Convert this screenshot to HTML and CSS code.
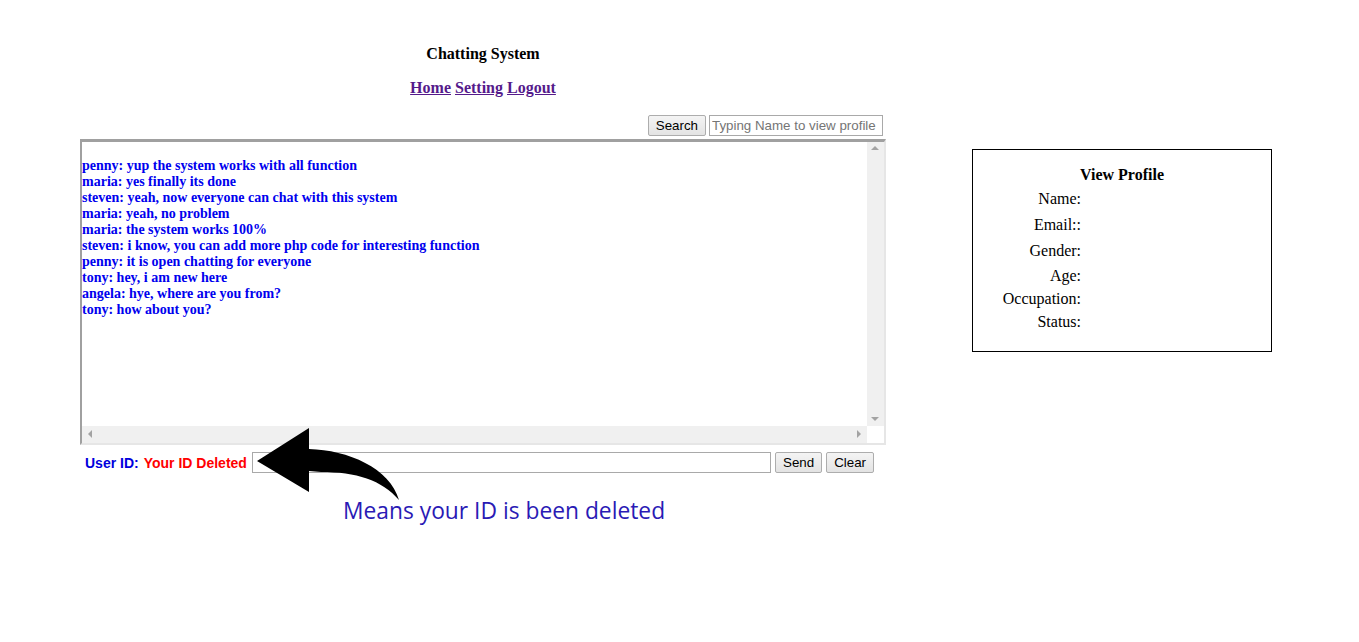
FILE: index.html
```html
<!DOCTYPE html>
<html>
<head>
<meta charset="utf-8">
<title>Chatting System</title>
<link rel="stylesheet" href="styles.css">
</head>
<body>
<div class="page">
  <div class="main">
    <h1 class="title">Chatting System</h1>
    <nav class="nav"><a href="#">Home</a> <a href="#">Setting</a> <a href="#">Logout</a></nav>
    <div class="search-row">
      <button class="btn">Search</button>
      <input class="field search-field" type="text" placeholder="Typing Name to view profile">
    </div>
    <div class="chat">
      <div class="chat-text">
        <div>penny: yup the system works with all function</div>
        <div>maria: yes finally its done</div>
        <div>steven: yeah, now everyone can chat with this system</div>
        <div>maria: yeah, no problem</div>
        <div>maria: the system works 100%</div>
        <div>steven: i know, you can add more php code for interesting function</div>
        <div>penny: it is open chatting for everyone</div>
        <div>tony: hey, i am new here</div>
        <div>angela: hye, where are you from?</div>
        <div>tony: how about you?</div>
      </div>
      <div class="vbar">
        <span class="tri tri-up"></span>
        <span class="tri tri-down"></span>
      </div>
      <div class="hbar">
        <span class="tri tri-left"></span>
        <span class="tri tri-right"></span>
      </div>
      <div class="corner"></div>
    </div>
    <div class="send-row">
      <span class="uid-label">User ID:</span>
      <span class="uid-value">Your ID Deleted</span>
      <input class="field msg-field" type="text">
      <button class="btn">Send</button>
      <button class="btn">Clear</button>
    </div>
    <div class="note">Means your ID is been deleted</div>
    <svg class="arrow" width="160" height="90" viewBox="0 0 160 90">
      <path d="M7,41 L59,8 L59,29 C98,30 140,48 149,80 C132,60 106,52 71,52 L59,51 L59,72 Z" fill="#000"/>
    </svg>
  </div>
  <aside class="profile">
    <h2 class="profile-title">View Profile</h2>
    <div class="profile-grid">
      <div class="lbl">Name:</div><div class="val"></div>
      <div class="lbl">Email::</div><div class="val"></div>
      <div class="lbl">Gender:</div><div class="val"></div>
      <div class="lbl">Age:</div><div class="val"></div>
      <div class="lbl">Occupation:</div><div class="val"></div>
      <div class="lbl">Status:</div><div class="val"></div>
    </div>
  </aside>
</div>
</body>
</html>
```
FILE: styles.css
```css
html, body {
  margin: 0;
  padding: 0;
  background: #fff;
}
body {
  font-family: "Liberation Serif", "Times New Roman", serif;
  color: #000;
}
.page {
  position: relative;
  display: flex;
  align-items: flex-start;
  padding: 45px 0 0 80px;
  gap: 86px;
}
.main {
  position: relative;
  width: 806px;
  display: flex;
  flex-direction: column;
}
.title {
  margin: 0;
  font-size: 16px;
  line-height: 18px;
  font-weight: bold;
  text-align: center;
  height: 18px;
}
.nav {
  margin-top: 16px;
  font-size: 16px;
  line-height: 18px;
  font-weight: bold;
  text-align: center;
}
.nav a {
  color: #551a8b;
  text-decoration: underline;
}
.search-row {
  margin-top: 18px;
  display: flex;
  justify-content: flex-end;
  gap: 3px;
  padding-right: 3px;
}
.btn {
  font-family: "Liberation Sans", Arial, sans-serif;
  font-size: 13.33px;
  height: 21px;
  padding: 0 7px;
  border: 1px solid #adadad;
  border-radius: 2px;
  background: linear-gradient(#f4f4f4, #e3e3e3);
  color: #000;
  line-height: 19px;
}
.field {
  font-family: "Liberation Sans", Arial, sans-serif;
  font-size: 13.33px;
  height: 21px;
  box-sizing: border-box;
  border: 1px solid #a9a9a9;
  padding: 1px 2px;
  margin: 0;
  background: #fff;
}
.field::placeholder {
  color: #757575;
}
.search-field {
  width: 174px;
}
.chat {
  margin-top: 3px;
  height: 306px;
  box-sizing: border-box;
  border-top: 3px solid #a0a0a0;
  border-left: 2px solid #a0a0a0;
  border-right: 2px solid #e6e6e6;
  border-bottom: 2px solid #e6e6e6;
  display: grid;
  grid-template-columns: 1fr 17px;
  grid-template-rows: 1fr 17px;
}
.chat-text {
  padding-top: 16px;
  font-size: 14px;
  line-height: 16px;
  font-weight: bold;
  color: #0000ee;
  overflow: hidden;
  white-space: nowrap;
}
.vbar, .hbar {
  background: #f0f0f0;
  position: relative;
}
.corner {
  background: #fff;
}
.tri {
  position: absolute;
  width: 0;
  height: 0;
  border: 4px solid transparent;
}
.tri-up {
  top: 4px;
  left: 4px;
  border-bottom: 4px solid #a3a3a3;
  border-top-width: 0;
}
.tri-down {
  bottom: 5px;
  left: 4px;
  border-top: 4px solid #a3a3a3;
  border-bottom-width: 0;
}
.tri-left {
  left: 6px;
  top: 4px;
  border-right: 4px solid #a3a3a3;
  border-left-width: 0;
}
.tri-right {
  right: 6px;
  top: 4px;
  border-left: 4px solid #a3a3a3;
  border-right-width: 0;
}
.send-row {
  margin-top: 7px;
  display: flex;
  align-items: center;
  gap: 4px;
  padding-left: 5px;
  padding-right: 12px;
  font-family: "Liberation Sans", Arial, sans-serif;
  font-size: 14px;
  font-weight: bold;
}
.uid-label {
  color: #0000dd;
  margin-right: 1px;
}
.uid-value {
  color: #ff0000;
}
.msg-field {
  flex: 1;
  margin-left: 1px;
}
.note {
  margin-top: 23px;
  padding-left: 263px;
  font-family: "Open Sans", "Noto Sans", sans-serif;
  font-size: 22.8px;
  line-height: 29px;
  color: #2a1ab5;
}
.arrow {
  position: absolute;
  left: 170px;
  top: 375px;
}
.profile {
  margin-top: 104px;
  width: 300px;
  box-sizing: border-box;
  border: 1px solid #000;
  padding: 15px 0 17px 0;
}
.profile-title {
  margin: 0 0 1px 0;
  font-size: 16px;
  line-height: 20px;
  font-weight: bold;
  text-align: center;
}
.profile-grid {
  display: grid;
  grid-template-columns: 108px 1fr;
  grid-template-rows: 26px 26px 26px 24px 22px 24px;
  font-size: 16px;
}
.lbl {
  display: flex;
  align-items: center;
  justify-content: flex-end;
}
```
